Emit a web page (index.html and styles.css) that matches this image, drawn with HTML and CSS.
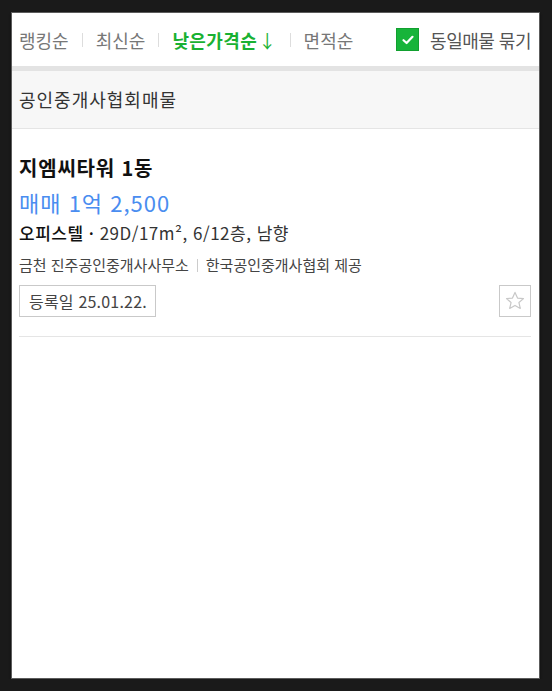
FILE: index.html
```html
<!DOCTYPE html>
<html lang="ko">
<head>
  <meta charset="utf-8">
  <link rel="stylesheet" href="styles.css">
</head>
<body>
<div class="panel">
  <div class="sortbar">
    <ul class="sorts">
      <li>랭킹순</li>
      <li class="sep"></li>
      <li>최신순</li>
      <li class="sep"></li>
      <li class="on">낮은가격순<span class="arrow">↓</span></li>
      <li class="sep"></li>
      <li>면적순</li>
    </ul>
    <label class="group">
      <span class="check">
        <svg width="14" height="14" viewBox="0 0 14 14"><path d="M2.5 7.2 L5.6 10 L11.5 3.8" fill="none" stroke="#fff" stroke-width="2.2" stroke-linecap="round" stroke-linejoin="round"/></svg>
      </span>
      동일매물 묶기
    </label>
  </div>
  <div class="section-head">공인중개사협회매물</div>
  <div class="item">
    <div class="item-title">지엠씨타워 1동</div>
    <div class="item-price">매매 1억 2,500</div>
    <div class="item-spec"><b>오피스텔 ·</b> 29D/17m², 6/12층, 남향</div>
    <div class="item-agent">금천 진주공인중개사사무소<span class="bar"></span>한국공인중개사협회 제공</div>
    <div class="item-foot">
      <span class="tag">등록일 25.01.22.</span>
      <span class="fav">
        <svg width="22" height="22" viewBox="0 0 20 20"><path d="M10 2.2 L12.3 7.3 L17.7 7.8 L13.6 11.4 L14.8 16.8 L10 14 L5.2 16.8 L6.4 11.4 L2.3 7.8 L7.7 7.3 Z" fill="none" stroke="#c8c8c8" stroke-width="1.1" stroke-linejoin="round"/></svg>
      </span>
    </div>
  </div>
</div>
</body>
</html>
```

FILE: styles.css
```css
body{
  margin:0;
  background:#1a1a1a;
  font-family:"Noto Sans CJK KR","Noto Sans",sans-serif;
  color:#222;
}
.panel{
  margin:12px 0 0 11px;
  width:527px;
  height:665px;
  background:#fff;
  border:1px solid #5c5c5c;
  box-shadow:0 2px 2px rgba(0,0,0,0.6);
}
.sortbar{
  display:flex;
  align-items:center;
  justify-content:space-between;
  height:53px;
  padding:0 8px 0 7px;
}
.sorts{
  display:flex;
  align-items:center;
  list-style:none;
  margin:0;
  padding:0;
  font-size:18px;
  line-height:24px;
  color:#777;
}
.sorts li.sep{
  width:1px;
  height:14px;
  background:#ddd;
  margin:0 13px;
}
.sorts li.on{
  color:#19b132;
  font-weight:bold;
  letter-spacing:0.4px;
}
.arrow{
  font-weight:normal;
  margin-left:1px;
}
.group{
  display:flex;
  align-items:center;
  font-size:18px;
  line-height:24px;
  color:#555;
  letter-spacing:-0.5px;
}
.check{
  display:flex;
  align-items:center;
  justify-content:center;
  width:21px;
  height:21px;
  background:#17b43a;
  border:1px solid #11a02f;
  margin-right:11px;
}
.section-head{
  border-top:5px solid #e3e3e3;
  border-bottom:1px solid #e5e5e5;
  background:#f7f7f7;
  height:57px;
  line-height:57px;
  padding-left:7px;
  font-size:18px;
  color:#333;
  letter-spacing:1px;
}
.item{
  margin:0 8px 0 7px;
  padding-top:27px;
  padding-bottom:19px;
  border-bottom:1px solid #e5e5e5;
}
.item-title{
  font-size:20px;
  font-weight:bold;
  line-height:24px;
  color:#111;
  letter-spacing:0.8px;
}
.item-price{
  margin-top:9px;
  font-size:22px;
  line-height:26px;
  color:#4a8df0;
  letter-spacing:1px;
}
.item-spec{
  margin-top:7px;
  font-size:17px;
  line-height:22px;
  color:#333;
  letter-spacing:0.5px;
}
.item-spec b{
  font-weight:500;
  color:#111;
}
.item-agent{
  margin-top:11px;
  font-size:15px;
  line-height:20px;
  color:#444;
  display:flex;
  align-items:center;
}
.bar{
  width:1px;
  height:13px;
  background:#ccc;
  margin:0 8px;
}
.item-foot{
  margin-top:10px;
  display:flex;
  justify-content:space-between;
  align-items:center;
}
.tag{
  display:inline-block;
  height:30px;
  line-height:30px;
  padding:0 8px 0 9px;
  border:1px solid #c9c9c9;
  font-size:16px;
  color:#444;
  letter-spacing:0.2px;
}
.fav{
  display:flex;
  align-items:center;
  justify-content:center;
  width:30px;
  height:30px;
  border:1px solid #c9c9c9;
}
```
